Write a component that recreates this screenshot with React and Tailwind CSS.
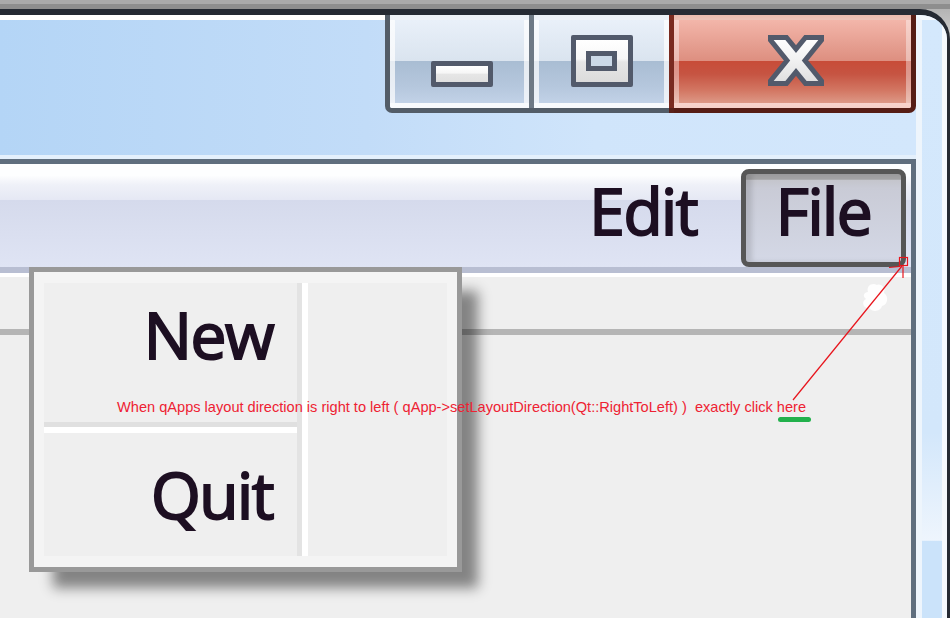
import React from "react";

const menuFont = { fontFamily: '"Open Sans", "Noto Sans", sans-serif' };

function MinIcon() {
  return (
    <div className="w-[62px] h-[26px] border-[5px] border-[#525a6b] rounded-[2px] bg-[linear-gradient(to_bottom,#ffffff_0%,#f6f6f6_45%,#e6e6e6_50%,#e0e0e0_100%)]" />
  );
}

function MaxIcon() {
  return (
    <div className="w-[62px] h-[52px] border-[5px] border-[#525a6b] rounded-[2px] bg-[linear-gradient(to_bottom,#ffffff_0%,#f7f7f7_45%,#e6e6e6_52%,#dcdcdc_100%)] pl-[10px] pt-[11px]">
      <div className="w-[31px] h-[20px] border-[5px] border-[#525a6b] bg-[#cbd9e7]" />
    </div>
  );
}

function CloseIcon() {
  return (
    <svg width="58" height="53" viewBox="-1 -1 58 53">
      <defs>
        <linearGradient id="xg" x1="0" y1="0" x2="0" y2="1">
          <stop offset="0" stopColor="#ffffff" />
          <stop offset="0.5" stopColor="#f1f1f1" />
          <stop offset="1" stopColor="#dedede" />
        </linearGradient>
      </defs>
      <polygon
        points="2.5,2.5 18.5,2.5 28,14 37.5,2.5 53.5,2.5 53.5,5 37,25.5 53.5,46 53.5,48.5 37.5,48.5 28,37 18.5,48.5 2.5,48.5 2.5,46 19,25.5 2.5,5"
        fill="url(#xg)"
        stroke="#525a6b"
        strokeWidth="5"
        strokeLinejoin="miter"
      />
    </svg>
  );
}

export default function App() {
  return (
    <div className="relative w-[950px] h-[618px] overflow-hidden bg-[linear-gradient(to_bottom,#aaaaaa_0px,#aaaaaa_4px,#8e8e8e_4px,#8e8e8e_9px,#b4b4b4_9px,#d6d6d6_45px,#d6d6d6_100%)]">
      {/* window */}
      <div className="mt-[9px] h-[609px] flex border-t-[6px] border-r-[3px] border-[#252a33] rounded-tr-[30px] overflow-hidden bg-[#d3e7fb]">
        {/* left main column */}
        <div className="w-[916px] shrink-0 flex flex-col">
          {/* title row */}
          <div className="h-[140px] flex bg-[linear-gradient(to_right,#b4d5f6_0%,#c2dcf8_40%,#d0e5fb_65%,#d3e7fc_100%)]">
            <div className="flex-1 border-t-[5px] border-white" />
            {/* caption buttons */}
            <div className="flex h-[98px]">
              <div className="w-[144px] h-full border-l-[5px] border-b-[5px] border-[#535d68] rounded-bl-[7px] overflow-hidden">
                <div className="h-full border-[5px] border-white/70 bg-[linear-gradient(to_bottom,#e9f0f9_0%,#dae4ef_49%,#a9bdd3_49.5%,#b5c7dd_80%,#c2d2e7_100%)] flex justify-center pl-[5px] pt-[41px]">
                  <MinIcon />
                </div>
              </div>
              <div className="w-[5px] h-full bg-[#6e7985] border-b-[5px] border-[#535d68]" />
              <div className="w-[135px] h-full border-b-[5px] border-[#535d68]">
                <div className="h-full border-[5px] border-white/70 bg-[linear-gradient(to_bottom,#e9f0f9_0%,#dae4ef_49%,#a9bdd3_49.5%,#b5c7dd_80%,#c2d2e7_100%)] flex justify-center pt-[15px]">
                  <MaxIcon />
                </div>
              </div>
              <div className="w-[5px] h-full bg-[#7a2b20] border-b-[5px] border-[#5a2119]" />
              <div className="w-[242px] h-full border-b-[5px] border-r-[5px] border-[#561d15] rounded-br-[7px] overflow-hidden">
                <div className="h-full border-[5px] border-white/40 bg-[linear-gradient(to_bottom,#f3b6aa_0%,#dd8f80_49%,#c84c38_49.5%,#c65442_65%,#d37763_85%,#dd9886_100%)] flex justify-center pl-[6px] pt-[14px]">
                  <CloseIcon />
                </div>
              </div>
            </div>
          </div>
          <div className="h-[4px] bg-[#e4f0fc]" />
          {/* client */}
          <div className="relative flex-1 flex flex-col border-t-[5px] border-r-[5px] border-[#5f6e7e]">
            {/* menubar */}
            <div
              className="h-[103px] flex justify-end items-start pr-[5px] bg-[linear-gradient(to_bottom,#fdfeff_0%,#fdfeff_11%,#eff1f8_20%,#e5e8f4_35%,#d5daec_35.1%,#dfe4f4_100%)] text-[64px] leading-none tracking-[-1.5px] text-[#1d0f22] [-webkit-text-stroke:2px_#1d0f22]"
              style={menuFont}
            >
              <div className="pt-[15px] mr-[44px]">Edit</div>
              <div className="mt-[5px] h-[98px] w-[165px] border-[5px] border-[#565656] rounded-[8px] flex justify-center pt-[5px] bg-[linear-gradient(to_bottom,#a2a2a4_0%,#a2a2a4_6%,#c4c5cc_7%,#c9cbd6_16%,#d4d8e6_100%)] shadow-[inset_6px_0_5px_rgba(0,0,0,0.12)]">
                File
              </div>
            </div>
            <div className="h-[6px] bg-[#b8bed2]" />
            <div className="h-[4px] bg-white" />
            <div className="flex-1 bg-[#efefef]">
              <div className="mt-[52px] h-[6px] bg-[#b5b5b5]" />
            </div>

            {/* popup menu */}
            <div
              className="absolute left-[29px] top-[103px] w-[433px] h-[305px] border-[5px] border-[#999999] bg-[#f4f4f4] px-[10px] py-[11px] flex shadow-[20px_20px_12px_-4px_rgba(0,0,0,0.45)] text-[64px] leading-none tracking-[-1.5px] text-[#1d0f22] [-webkit-text-stroke:2px_#1d0f22]"
              style={menuFont}
            >
              <div className="w-[253px] flex flex-col">
                <div className="h-[139px] bg-[#efefef] flex justify-end pr-[24px] pt-[20px]">New</div>
                <div className="h-[5px] bg-[#e0e0e0]" />
                <div className="h-[6px] bg-white" />
                <div className="flex-1 bg-[#efefef] flex justify-end pr-[24px] pt-[30px]">Quit</div>
              </div>
              <div className="w-[5px] bg-[#e3e3e3]" />
              <div className="w-[6px] bg-white" />
              <div className="flex-1 bg-[#efefef]" />
            </div>
          </div>
        </div>
        {/* right frame strip */}
        <div className="flex-1 border-t-[5px] border-t-[#f5f9fe] border-l-[6px] border-l-[#eef5fc] border-r-[5px] border-r-[#f5f9fe] bg-[linear-gradient(to_bottom,#d4e8fc_0%,#d3e7fb_69%,#eef5fd_87%,#cbe3fa_87.2%,#cbe3fa_100%)]" />
      </div>

      {/* annotation overlay */}
      <svg className="absolute left-0 top-0 pointer-events-none" width="950" height="618" viewBox="0 0 950 618">
        <path
          d="M868 292 C866 286 872 282 877 285 C881 283 886 288 884 293 C889 296 888 305 882 306 C881 311 873 313 869 308 C863 309 861 301 866 299 C862 296 864 292 868 292 Z"
          fill="#ffffff"
          opacity="0.9"
        />
        <line x1="793" y1="400" x2="902" y2="266" stroke="#e8141c" strokeWidth="1.2" />
        <rect x="899.5" y="257.5" width="8" height="8" fill="none" stroke="#e8141c" strokeWidth="1.2" />
        <line x1="889" y1="267.5" x2="900" y2="266.5" stroke="#e8141c" strokeWidth="1.2" />
        <line x1="903" y1="266" x2="903" y2="278" stroke="#e8141c" strokeWidth="1.2" />
        <line x1="780.5" y1="419.5" x2="808.5" y2="419.5" stroke="#22b14c" strokeWidth="5" strokeLinecap="round" />
      </svg>
      <div
        className="absolute left-[117px] top-[400px] text-[14.6px] leading-none whitespace-pre text-[#ee2233]"
        style={{ fontFamily: '"Liberation Sans", Arial, sans-serif' }}
      >
        {"When qApps layout direction is right to left ( qApp->setLayoutDirection(Qt::RightToLeft) )  exactly click here"}
      </div>
    </div>
  );
}
